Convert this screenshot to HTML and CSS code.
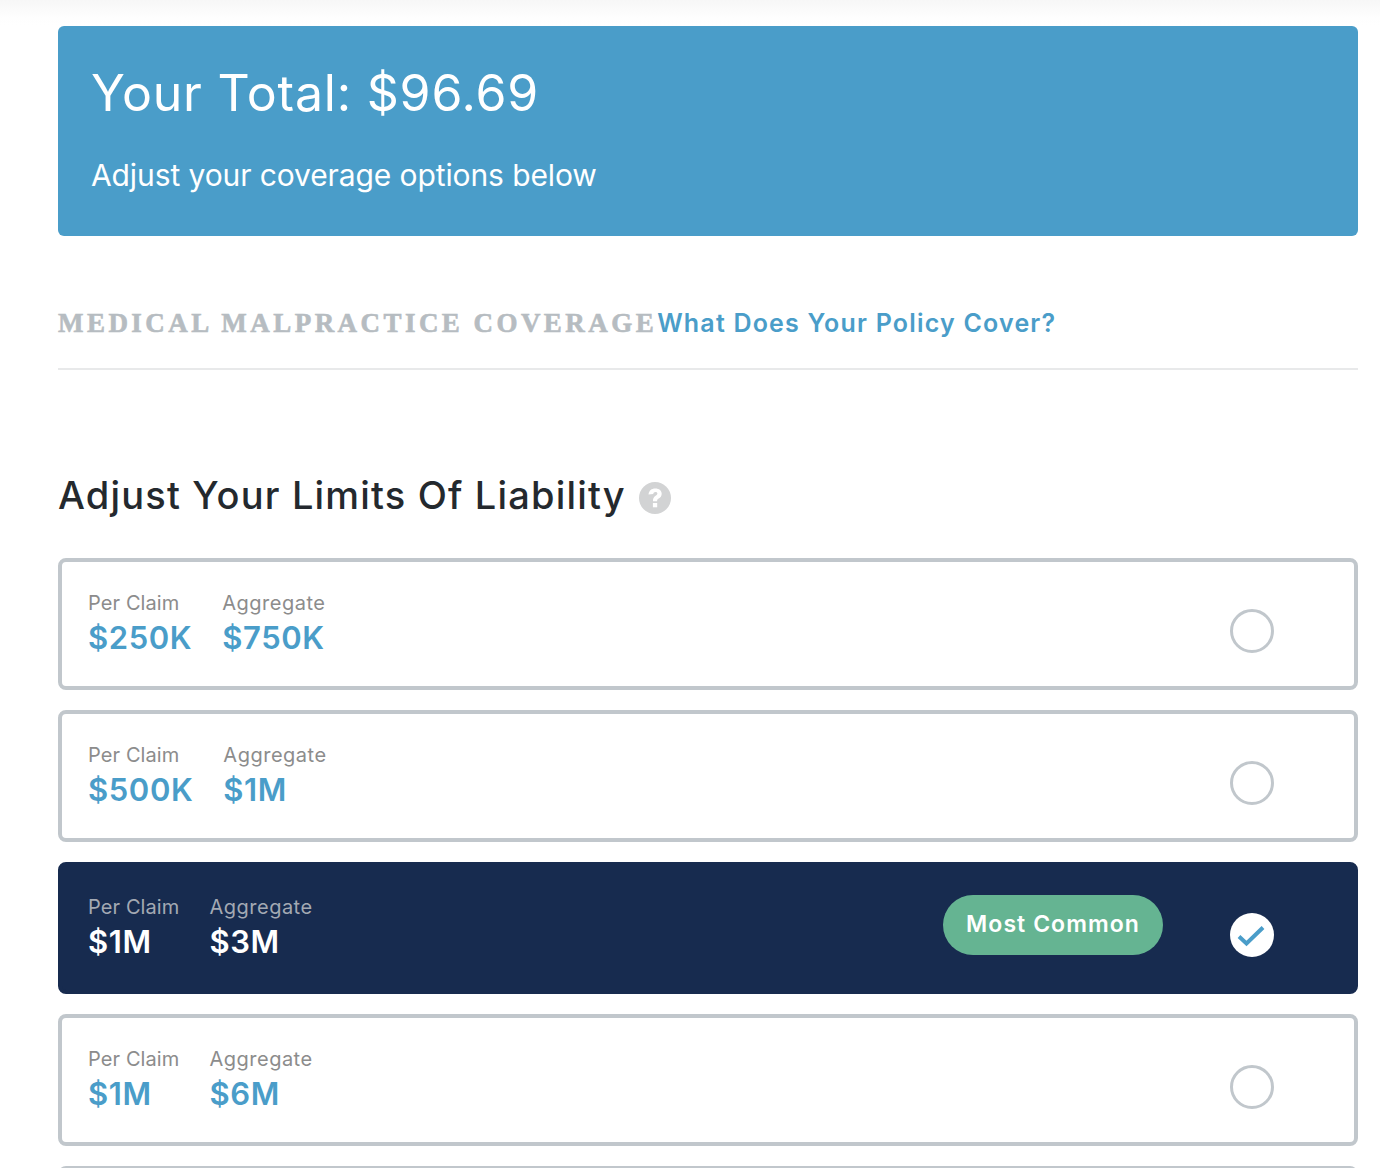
FILE: index.html
```html
<!DOCTYPE html>
<html lang="en">
<head>
<meta charset="utf-8">
<title>Your Total</title>
<link rel="stylesheet" href="styles.css">
</head>
<body>
<div class="top-fade"></div>
<main class="page">
  <section class="hero">
    <h1 class="hero-title">Your Total: $96.69</h1>
    <p class="hero-sub">Adjust your coverage options below</p>
  </section>
  <div class="section-head">
    <span class="section-title">MEDICAL MALPRACTICE COVERAGE</span>
    <a class="section-link" href="#">What Does Your Policy Cover?</a>
  </div>
  <h2 class="limits-title">Adjust Your Limits Of Liability
    <svg class="help" viewBox="0 0 32 32" aria-hidden="true"><circle cx="16" cy="16" r="16" fill="#d2d3d4"/><path d="M9.500 12.500C10 8.500 12.500 6.500 16.300 6.500c3.900 0 6.400 2.200 6.400 5.300 0 2.400-1.300 3.700-3 4.800-1.200.8-1.600 1.300-1.600 2.600h-4.100c-.1-2.700.7-4.100 2.600-5.400 1.100-.8 1.800-1.300 1.800-2.200 0-1-.8-1.600-1.900-1.600-1.300 0-2.100.8-2.300 2.100z" fill="#fff"/><rect x="13.900" y="21" width="4.300" height="4.300" fill="#fff"/></svg>
  </h2>
  <div class="options">
    <div class="option">
      <div class="figures">
        <div class="figure"><span class="label">Per Claim</span><span class="amount">$250K</span></div>
        <div class="figure"><span class="label">Aggregate</span><span class="amount">$750K</span></div>
      </div>
      <span class="radio"></span>
    </div>
    <div class="option">
      <div class="figures">
        <div class="figure"><span class="label">Per Claim</span><span class="amount">$500K</span></div>
        <div class="figure"><span class="label">Aggregate</span><span class="amount">$1M</span></div>
      </div>
      <span class="radio"></span>
    </div>
    <div class="option selected">
      <div class="figures">
        <div class="figure"><span class="label">Per Claim</span><span class="amount">$1M</span></div>
        <div class="figure"><span class="label">Aggregate</span><span class="amount">$3M</span></div>
      </div>
      <span class="badge">Most Common</span>
      <span class="radio checked"><svg viewBox="0 0 44 44" aria-hidden="true"><path d="M9 23.500l7.500 7L33 14.500" fill="none" stroke="#4a9dc9" stroke-width="4"/></svg></span>
    </div>
    <div class="option">
      <div class="figures">
        <div class="figure"><span class="label">Per Claim</span><span class="amount">$1M</span></div>
        <div class="figure"><span class="label">Aggregate</span><span class="amount">$6M</span></div>
      </div>
      <span class="radio"></span>
    </div>
    <div class="option"></div>
  </div>
</main>
</body>
</html>
```
FILE: styles.css
```css
* { box-sizing: border-box; }
html, body { margin: 0; height: 1168px; overflow: hidden; background: #fff; }
body { font-family: Inter, Lato, sans-serif; color: #24292e; }
.top-fade { height: 26px; background: linear-gradient(#f7f7f7, #fefefe 70%, #fff); }
.page { width: 1300px; margin-left: 58px; }
.hero { height: 210px; background: #4a9dc9; border-radius: 6px; color: #fff; padding: 35px 33px 0; }
.hero-title { margin: 0; font-size: 50px; line-height: 64px; font-weight: 400; letter-spacing: 0.8px; }
.hero-sub { margin: 32px 0 0; font-size: 30px; line-height: 36px; letter-spacing: -0.1px; }
.section-head { display: flex; align-items: center; height: 134px; border-bottom: 2px solid #e8e9ea; padding-top: 42px; }
.section-title { font-family: "Liberation Serif", serif; font-weight: 700; font-size: 27px; letter-spacing: 3.45px; color: #b6bcc1; -webkit-text-stroke: 0.6px #b6bcc1; }
.section-link { color: #4a9dc9; font-weight: 600; font-size: 25px; letter-spacing: 1.2px; text-decoration: none; }
.limits-title { display: flex; align-items: center; gap: 13px; margin: 98px 0 0; height: 54px; font-size: 38px; font-weight: 500; letter-spacing: 1.17px; }
.help { width: 32px; height: 32px; margin-top: 6px; }
.options { display: flex; flex-direction: column; gap: 20px; margin-top: 36px; }
.option { position: relative; display: flex; align-items: center; height: 132px; border: 4px solid #c1c7cc; border-radius: 8px; padding: 0 80px 0 26px; background: #fff; }
.figures { display: flex; gap: 30px; margin-right: auto; }
.figure { display: flex; flex-direction: column; }
.label { font-size: 20px; line-height: 28px; color: #8c8c8c; letter-spacing: 0.1px; }
.figure + .figure .label { letter-spacing: 0.5px; }
.amount { font-size: 31px; line-height: 42px; font-weight: 600; color: #4a9dc9; letter-spacing: 0.6px; }
.radio { width: 44px; height: 44px; border-radius: 50%; border: 3px solid #c1c7cc; background: #fff; margin-top: 14px; }
.selected { background: #172b4f; border-color: #172b4f; }
.selected .amount { color: #fff; }
.selected .label { color: #a3a9b3; }
.badge { display: flex; align-items: center; justify-content: center; width: 220px; height: 60px; border-radius: 30px; padding-bottom: 3px; margin-right: 67px; margin-top: -6px; background: #65b492; color: #fff; font-weight: 600; font-size: 23px; letter-spacing: 1.05px; }
.radio.checked { border: 0; }
.radio.checked svg { display: block; width: 44px; height: 44px; }
```
